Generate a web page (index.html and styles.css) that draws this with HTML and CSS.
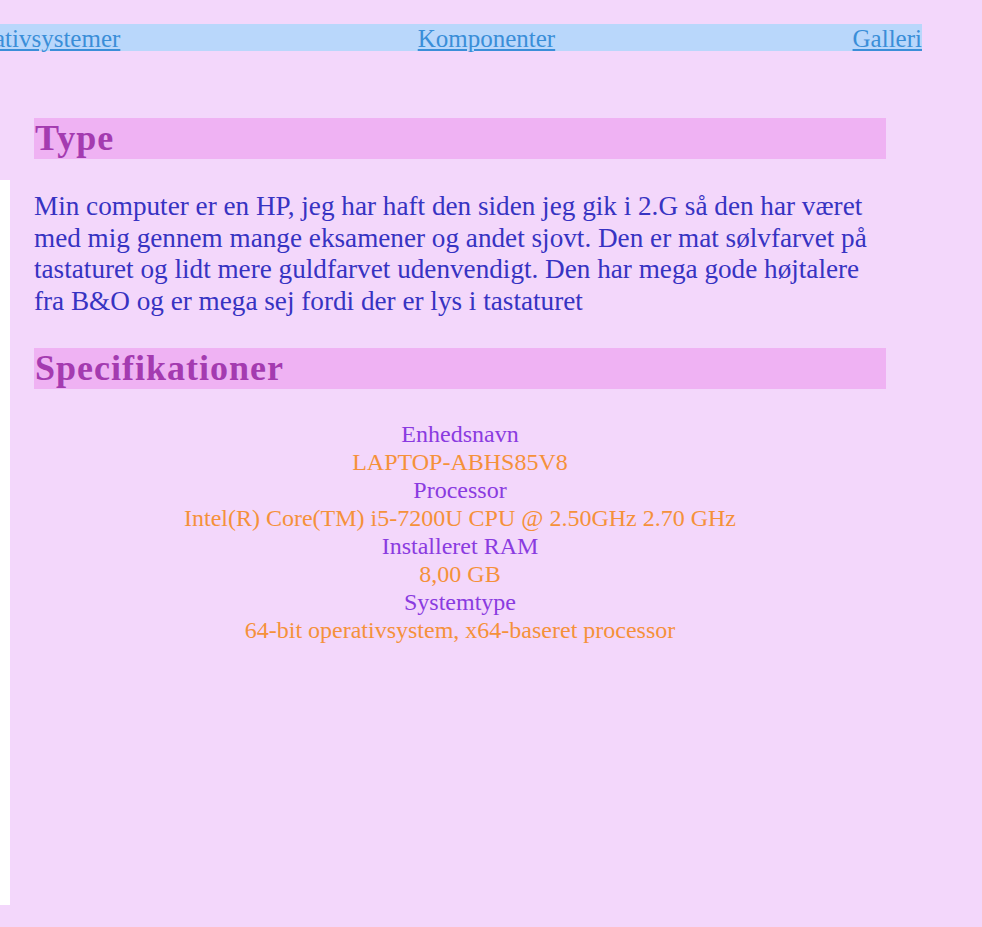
FILE: index.html
```html
<!DOCTYPE html>
<html lang="da">
<head>
<meta charset="utf-8">
<title>Min computer</title>
<link rel="stylesheet" href="styles.css">
</head>
<body>
<nav class="nav">
  <a href="#">Operativsystemer</a>
  <a href="#">Komponenter</a>
  <a href="#">Galleri</a>
</nav>
<h1 class="heading heading-first">Type</h1>
<div class="content-row">
  <div class="strip"></div>
  <div class="content">
    <p class="text">Min computer er en HP, jeg har haft den siden jeg gik i 2.G så den har været med mig gennem mange eksamener og andet sjovt. Den er mat sølvfarvet på tastaturet og lidt mere guldfarvet udenvendigt. Den har mega gode højtalere fra B&amp;O og er mega sej fordi der er lys i tastaturet</p>
    <h2 class="heading">Specifikationer</h2>
    <div class="specs">
      <div class="label">Enhedsnavn</div>
      <div class="value">LAPTOP-ABHS85V8</div>
      <div class="label">Processor</div>
      <div class="value">Intel(R) Core(TM) i5-7200U CPU @ 2.50GHz 2.70 GHz</div>
      <div class="label">Installeret RAM</div>
      <div class="value">8,00 GB</div>
      <div class="label">Systemtype</div>
      <div class="value">64-bit operativsystem, x64-baseret processor</div>
    </div>
  </div>
</div>
</body>
</html>
```
FILE: styles.css
```css
html, body {
  margin: 0;
  padding: 0;
  background: #f3d7fb;
}
body {
  font-family: "Liberation Serif", serif;
  overflow-x: hidden;
  padding-top: 24px;
}
.nav {
  display: flex;
  justify-content: space-between;
  align-items: flex-end;
  margin-left: -56px;
  width: 978px;
  height: 27px;
  background: #b9d7fb;
}
.nav a {
  color: #3a8ed8;
  font-size: 25px;
  line-height: 25px;
}
.heading {
  margin: 0 0 0 34px;
  width: 852px;
  height: 41px;
  box-sizing: border-box;
  background: #efb2f3;
  color: #a43bb0;
  font-size: 36px;
  line-height: 41px;
  font-weight: bold;
  letter-spacing: 1px;
  padding-left: 1px;
  overflow: hidden;
}
.heading-first {
  margin-top: 67px;
}
.content-row {
  display: flex;
  margin-top: 21px;
}
.strip {
  flex: none;
  width: 10px;
  height: 725px;
  background: #ffffff;
}
.content {
  margin-left: 24px;
  width: 852px;
}
.text {
  margin: 11px 0 0 0;
  color: #3733c2;
  font-size: 27.2px;
  line-height: 31.7px;
}
.content .heading {
  margin: 30px 0 0 0;
}
.specs {
  margin-top: 31px;
  text-align: center;
  font-size: 24px;
  line-height: 28px;
}
.label {
  color: #8a3be0;
}
.value {
  color: #f5913a;
}
```
